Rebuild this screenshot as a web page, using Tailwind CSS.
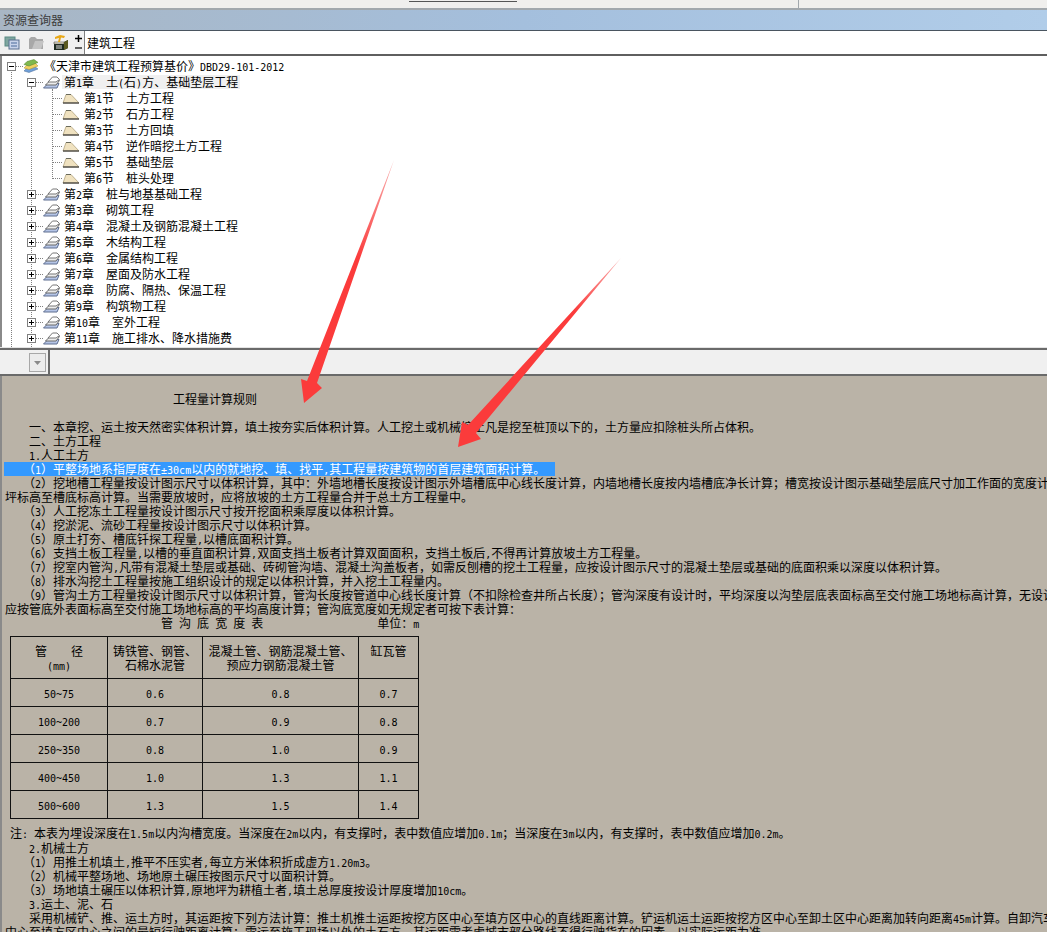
<!DOCTYPE html>
<html lang="zh-CN">

<head>
    <meta charset="UTF-8">
    <script src="https://cdn.jsdelivr.net/npm/@tailwindcss/browser@4"></script>
    <title>资源查询器</title>
</head>

<body class="bg-white">
    <svg class="hidden">
        <symbol id="plus" viewBox="0 0 9 9">
            <rect x="0.5" y="0.5" width="8" height="8" fill="#fff" stroke="#808080" />
            <path d="M2 4.5h5M4.5 2v5" stroke="#000" />
        </symbol>
        <symbol id="minus" viewBox="0 0 9 9">
            <rect x="0.5" y="0.5" width="8" height="8" fill="#fff" stroke="#808080" />
            <path d="M2 4.5h5" stroke="#000" />
        </symbol>
        <symbol id="layers" viewBox="0 0 16 14">
            <path d="M4 9 11 7 15 10 6 13.500 1 12Z" fill="#6f9fd8" stroke="#4a6a96" stroke-width=".5" />
            <path d="M4 6 12 4 15 7 6 10.500 1 9Z" fill="#f0d060" stroke="#a89030" stroke-width=".5" />
            <path d="M4 2.500 11 .5 15 3.500 6 7 1 5.500Z" fill="#7fb84e" stroke="#4f7f2c" stroke-width=".5" />
        </symbol>
        <symbol id="pages" viewBox="0 0 17 13">
            <path d="M0.500 12 5 7.500H16L14 12Z" fill="#b4c4e6" stroke="#5f6f90" />
            <path d="M2.500 9 7 4.500H16.500L13 9Z" fill="#ececec" stroke="#6a6a6a" />
            <path d="M5 6 9.500 1H14L16.500 3.500 13 6Z" fill="#fff" stroke="#777" />
        </symbol>
        <symbol id="leaf" viewBox="0 0 18 11">
            <path d="M1 10 4 1.500H9L17 10Z" fill="#f0e2c0" stroke="#a89870" stroke-width=".7" />
            <path d="M1 10H17" stroke="#3a3a3a" stroke-width="1.200" />
            <path d="M4 1.500H9" stroke="#6a6a5a" />
        </symbol>
    </svg>

    <div class="relative h-[932px] w-[1047px] overflow-hidden font-['Noto_Sans_CJK_SC',sans-serif] text-[12px] leading-[14px] text-black [&_code]:font-['DejaVu_Sans_Mono'] [&_code]:text-[10px] [&_code]:leading-none">
        <!-- 顶部残留的工具栏 -->
        <div class="relative flex h-[10px] border-b-2 border-[#a2a8ad] bg-[#f0efed]">
            <div class="ml-[409px] h-[2px] w-[108px] self-start border-b border-[#555] mt-0"></div>
            <div class="ml-[281px] h-full w-[1px] bg-[#a2a8ad]"></div>
        </div>

        <!-- 标题栏 -->
        <div class="flex h-[21px] items-center border-b border-[#4a5560] bg-gradient-to-r from-[#a8b6c4] via-[#a4bfdd] to-[#b1cde9] pl-[3px] text-[#3c3c3c]">资源查询器</div>

        <!-- 工具栏 -->
        <div class="flex h-[23px] items-center bg-[#f0f0f0]">
            <svg class="ml-[4px] h-[14px] w-[16px]" viewBox="0 0 16 14">
                <rect x="1" y="1" width="10" height="9" fill="#7fa6a0" stroke="#5b8a84" />
                <rect x="5" y="4" width="10" height="9" fill="#c8d4ea" stroke="#5a7090" />
                <path d="M7 7h6M7 10h6" stroke="#4a6a9a" />
            </svg>
            <svg class="ml-[8px] h-[14px] w-[17px]" viewBox="0 0 17 14">
                <path d="M1 3 3 1H7L9 3H15V13H1Z" fill="#a8a8a8" />
                <path d="M4 13 7 5H16L13 13Z" fill="#c4c4c4" />
            </svg>
            <svg class="ml-[7px] h-[17px] w-[17px]" viewBox="0 0 17 17">
                <path d="M2 8H12L16 6V14L12 16H2Z" fill="#1e2a20" />
                <path d="M2 8H12V10H2Z" fill="#e8e4d0" stroke="#333" stroke-width=".5" />
                <path d="M12 8 16 6V14L12 16Z" fill="#5a5a20" />
                <path d="M3 3 8 1 13 2 12 4 9 3.500 8 8H6L7 4 3 5Z" fill="#e8a818" />
                <path d="M4 12h6M4 14h6" stroke="#ddd" />
            </svg>
            <div class="ml-[4px] flex h-full w-[10px] flex-col items-center justify-between py-[2px] font-bold leading-[10px]">
                <svg class="mt-[2px] h-[7px] w-[7px]" viewBox="0 0 7 7"><path d="M0 3.500h7M3.500 0v7" stroke="#000" stroke-width="1.500" /></svg>
                <svg class="mb-[3px] h-[2px] w-[7px]" viewBox="0 0 7 2"><path d="M0 1h7" stroke="#000" stroke-width="1.200" /></svg>
            </div>
            <div class="ml-[1px] flex h-full flex-1 items-center border-l border-[#808080] bg-white pl-[2px]">建筑工程</div>
        </div>
        <div class="h-[2px] bg-[#5f5f5f]"></div>

        <!-- 资源树 -->
        <div class="relative h-[291px] overflow-hidden border-l-2 border-[#8a8a8a] bg-white pt-[2px]">
            <div class="absolute left-[9px] top-[11px] h-[290px] border-l border-dotted border-[#808080]"></div>
            <div class="absolute left-[29px] top-[31px] h-[270px] border-l border-dotted border-[#808080]"></div>
            <div class="absolute left-[50px] top-[33px] h-[90px] border-l border-dotted border-[#808080]"></div>

            <div class="relative flex h-4 items-center pl-[5px]">
                <svg class="h-[9px] w-[9px]"><use href="#minus" /></svg>
                <div class="w-[7px] border-t border-dotted border-[#808080]"></div>
                <svg class="h-[14px] w-[16px]"><use href="#layers" /></svg>
                <span class="ml-[5px]">《天津市建筑工程预算基价》<code>DBD29-101-2012</code></span>
            </div>
            <div class="relative flex h-4 items-center pl-[25px]">
                <svg class="h-[9px] w-[9px]"><use href="#minus" /></svg>
                <div class="w-[7px] border-t border-dotted border-[#808080]"></div>
                <svg class="h-[13px] w-[17px]"><use href="#pages" /></svg>
                <span class="ml-[2px] bg-[#f0f0f0] pr-[2px] pl-[2px]">第<code>1</code>章　土<code>(</code>石<code>)</code>方、基础垫层工程</span>
            </div>
            <div class="relative flex h-4 items-center pl-[50px]">
                <div class="w-[10px] border-t border-dotted border-[#808080]"></div>
                <svg class="h-[11px] w-[18px]"><use href="#leaf" /></svg>
                <span class="ml-[4px]">第<code>1</code>节　土方工程</span>
            </div>
            <div class="relative flex h-4 items-center pl-[50px]">
                <div class="w-[10px] border-t border-dotted border-[#808080]"></div>
                <svg class="h-[11px] w-[18px]"><use href="#leaf" /></svg>
                <span class="ml-[4px]">第<code>2</code>节　石方工程</span>
            </div>
            <div class="relative flex h-4 items-center pl-[50px]">
                <div class="w-[10px] border-t border-dotted border-[#808080]"></div>
                <svg class="h-[11px] w-[18px]"><use href="#leaf" /></svg>
                <span class="ml-[4px]">第<code>3</code>节　土方回填</span>
            </div>
            <div class="relative flex h-4 items-center pl-[50px]">
                <div class="w-[10px] border-t border-dotted border-[#808080]"></div>
                <svg class="h-[11px] w-[18px]"><use href="#leaf" /></svg>
                <span class="ml-[4px]">第<code>4</code>节　逆作暗挖土方工程</span>
            </div>
            <div class="relative flex h-4 items-center pl-[50px]">
                <div class="w-[10px] border-t border-dotted border-[#808080]"></div>
                <svg class="h-[11px] w-[18px]"><use href="#leaf" /></svg>
                <span class="ml-[4px]">第<code>5</code>节　基础垫层</span>
            </div>
            <div class="relative flex h-4 items-center pl-[50px]">
                <div class="w-[10px] border-t border-dotted border-[#808080]"></div>
                <svg class="h-[11px] w-[18px]"><use href="#leaf" /></svg>
                <span class="ml-[4px]">第<code>6</code>节　桩头处理</span>
            </div>
            <div id="chapters"></div>
        </div>

        <!-- 中间的下拉条 -->
        <div class="h-[1px] bg-[#e4e4e4]"></div>
        <div class="h-[2px] bg-[#6a6a6a]"></div>
        <div class="flex h-[24px] bg-[#f0f0f0]">
            <div class="ml-[29px] mt-[3px] flex h-[19px] w-[17px] items-center justify-center border border-[#a8a8a8] bg-[#ececec]">
                <svg class="h-[4px] w-[7px]" viewBox="0 0 7 4"><path d="M0 0H7L3.500 4Z" fill="#8a8a8a" /></svg>
            </div>
            <div class="ml-[2px] w-[2px] bg-[#6a6a6a]"></div>
        </div>
        <div class="h-[2px] bg-[#6a6a6a]"></div>

        <!-- 说明正文 -->
        <div class="h-[600px] border-l-2 border-[#8a8a8a] bg-[#bab3a7] pl-[3px] pt-[16px] [&_p]:h-[14px] [&_p]:whitespace-pre">
            <p class="pl-[168px]">工程量计算规则</p>
            <p></p>
            <p>　　一、本章挖、运土按天然密实体积计算，填土按夯实后体积计算。人工挖土或机械挖土凡是挖至桩顶以下的，土方量应扣除桩头所占体积。</p>
            <p>　　二、土方工程</p>
            <p>　　<code>1.</code>人工土方</p>
            <p class="-ml-[1px] w-[551px] bg-[#3399ff] pl-[1px] text-white">　　（<code>1</code>）平整场地系指厚度在<code>±30cm</code>以内的就地挖、填、找平<code>,</code>其工程量按建筑物的首层建筑面积计算。</p>
            <p>　　（<code>2</code>）挖地槽工程量按设计图示尺寸以体积计算，其中：外墙地槽长度按设计图示外墙槽底中心线长度计算，内墙地槽长度按内墙槽底净长计算；槽宽按设计图示基础垫层底尺寸加工作面的宽度计算；槽深按自然地</p>
            <p>坪标高至槽底标高计算。当需要放坡时，应将放坡的土方工程量合并于总土方工程量中。</p>
            <p>　　（<code>3</code>）人工挖冻土工程量按设计图示尺寸按开挖面积乘厚度以体积计算。</p>
            <p>　　（<code>4</code>）挖淤泥、流砂工程量按设计图示尺寸以体积计算。</p>
            <p>　　（<code>5</code>）原土打夯、槽底钎探工程量<code>,</code>以槽底面积计算。</p>
            <p>　　（<code>6</code>）支挡土板工程量<code>,</code>以槽的垂直面积计算<code>,</code>双面支挡土板者计算双面面积，支挡土板后<code>,</code>不得再计算放坡土方工程量。</p>
            <p>　　（<code>7</code>）挖室内管沟<code>,</code>凡带有混凝土垫层或基础、砖砌管沟墙、混凝土沟盖板者，如需反刨槽的挖土工程量，应按设计图示尺寸的混凝土垫层或基础的底面积乘以深度以体积计算。</p>
            <p>　　（<code>8</code>）排水沟挖土工程量按施工组织设计的规定以体积计算，并入挖土工程量内。</p>
            <p>　　（<code>9</code>）管沟土方工程量按设计图示尺寸以体积计算，管沟长度按管道中心线长度计算（不扣除检查井所占长度）；管沟深度有设计时，平均深度以沟垫层底表面标高至交付施工场地标高计算，无设计时，直埋管</p>
            <p>应按管底外表面标高至交付施工场地标高的平均高度计算；管沟底宽度如无规定者可按下表计算：</p>
            <p class="pl-[156px]">管<code> </code>沟<code> </code>底<code> </code>宽<code> </code>度<code> </code>表<span class="ml-[114px]">单位：<code>m</code></span></p>

            <table class="ml-[5px] mt-[6px] mb-[7px] w-[408px] table-fixed border-collapse text-center [&_td]:border [&_td]:border-[#111]">
                <colgroup>
                    <col class="w-[97px]"><col class="w-[95px]"><col class="w-[156px]"><col class="w-[60px]">
                </colgroup>
                <tr class="h-[42px] align-top">
                    <td class="pt-[7px]">管　　径<br><code>(mm)</code></td>
                    <td class="pt-[7px]">铸铁管、钢管、<br>石棉水泥管</td>
                    <td class="pt-[7px]">混凝土管、钢筋混凝土管、<br>预应力钢筋混凝土管</td>
                    <td class="pt-[7px]">缸瓦管</td>
                </tr>
                <tr class="h-[28px]"><td><code>50~75</code></td><td><code>0.6</code></td><td><code>0.8</code></td><td><code>0.7</code></td></tr>
                <tr class="h-[28px]"><td><code>100~200</code></td><td><code>0.7</code></td><td><code>0.9</code></td><td><code>0.8</code></td></tr>
                <tr class="h-[28px]"><td><code>250~350</code></td><td><code>0.8</code></td><td><code>1.0</code></td><td><code>0.9</code></td></tr>
                <tr class="h-[28px]"><td><code>400~450</code></td><td><code>1.0</code></td><td><code>1.3</code></td><td><code>1.1</code></td></tr>
                <tr class="h-[28px]"><td><code>500~600</code></td><td><code>1.3</code></td><td><code>1.5</code></td><td><code>1.4</code></td></tr>
            </table>

            <p class="pl-[5px]">注<code>: </code>本表为埋设深度在<code>1.5m</code>以内沟槽宽度。当深度在<code>2m</code>以内，有支撑时，表中数值应增加<code>0.1m</code>；当深度在<code>3m</code>以内，有支撑时，表中数值应增加<code>0.2m</code>。</p>
            <p class="mt-[1px]">　　<code>2.</code>机械土方</p>
            <p>　　（<code>1</code>）用推土机填土<code>,</code>推平不压实者<code>,</code>每立方米体积折成虚方<code>1.20m3</code>。</p>
            <p>　　（<code>2</code>）机械平整场地、场地原土碾压按图示尺寸以面积计算。</p>
            <p>　　（<code>3</code>）场地填土碾压以体积计算<code>,</code>原地坪为耕植土者<code>,</code>填土总厚度按设计厚度增加<code>10cm</code>。</p>
            <p>　　<code>3.</code>运土、泥、石</p>
            <p>　　采用机械铲、推、运土方时，其运距按下列方法计算：推土机推土运距按挖方区中心至填方区中心的直线距离计算。铲运机运土运距按挖方区中心至卸土区中心距离加转向距离<code>45m</code>计算。自卸汽车运距按挖方区</p>
            <p>中心至填方区中心之间的最短行驶距离计算；需运至施工现场以外的土石方，其运距需考虑城市部分路线不得行驶货车的因素，以实际运距为准。</p>
        </div>

        <!-- 截图上标注的红色箭头 -->
        <svg class="absolute left-0 top-0 h-[932px] w-[1047px]" viewBox="0 0 1047 932">
            <defs>
                <linearGradient id="fade1" gradientUnits="userSpaceOnUse" x1="394" y1="160" x2="360" y2="260">
                    <stop offset="0" stop-color="#f9b0b0" />
                    <stop offset="1" stop-color="#fb3b3b" />
                </linearGradient>
                <linearGradient id="fade2" gradientUnits="userSpaceOnUse" x1="621" y1="258" x2="575" y2="312">
                    <stop offset="0" stop-color="#f9b0b0" />
                    <stop offset="1" stop-color="#fb3b3b" />
                </linearGradient>
            </defs>
            <polygon points="394,160 317,383 322,388 304,403 301,379 307,381" fill="url(#fade1)" />
            <polygon points="621,258 476,433 481,439 458,447 462,422 468,425" fill="url(#fade2)" />
        </svg>
    </div>

    <script>
        // 其余各章
        const chapters = [
            "第<code>2</code>章　桩与地基基础工程", "第<code>3</code>章　砌筑工程", "第<code>4</code>章　混凝土及钢筋混凝土工程",
            "第<code>5</code>章　木结构工程", "第<code>6</code>章　金属结构工程", "第<code>7</code>章　屋面及防水工程",
            "第<code>8</code>章　防腐、隔热、保温工程", "第<code>9</code>章　构筑物工程", "第<code>10</code>章　室外工程",
            "第<code>11</code>章　施工排水、降水措施费"
        ];

        document.getElementById('chapters').innerHTML = chapters.map(name => `
            <div class="relative flex h-4 items-center pl-[25px]">
                <svg class="h-[9px] w-[9px]"><use href="#plus" /></svg>
                <div class="w-[7px] border-t border-dotted border-[#808080]"></div>
                <svg class="h-[13px] w-[17px]"><use href="#pages" /></svg>
                <span class="ml-[4px]">${name}</span>
            </div>`).join('');
    </script>
</body>

</html>
